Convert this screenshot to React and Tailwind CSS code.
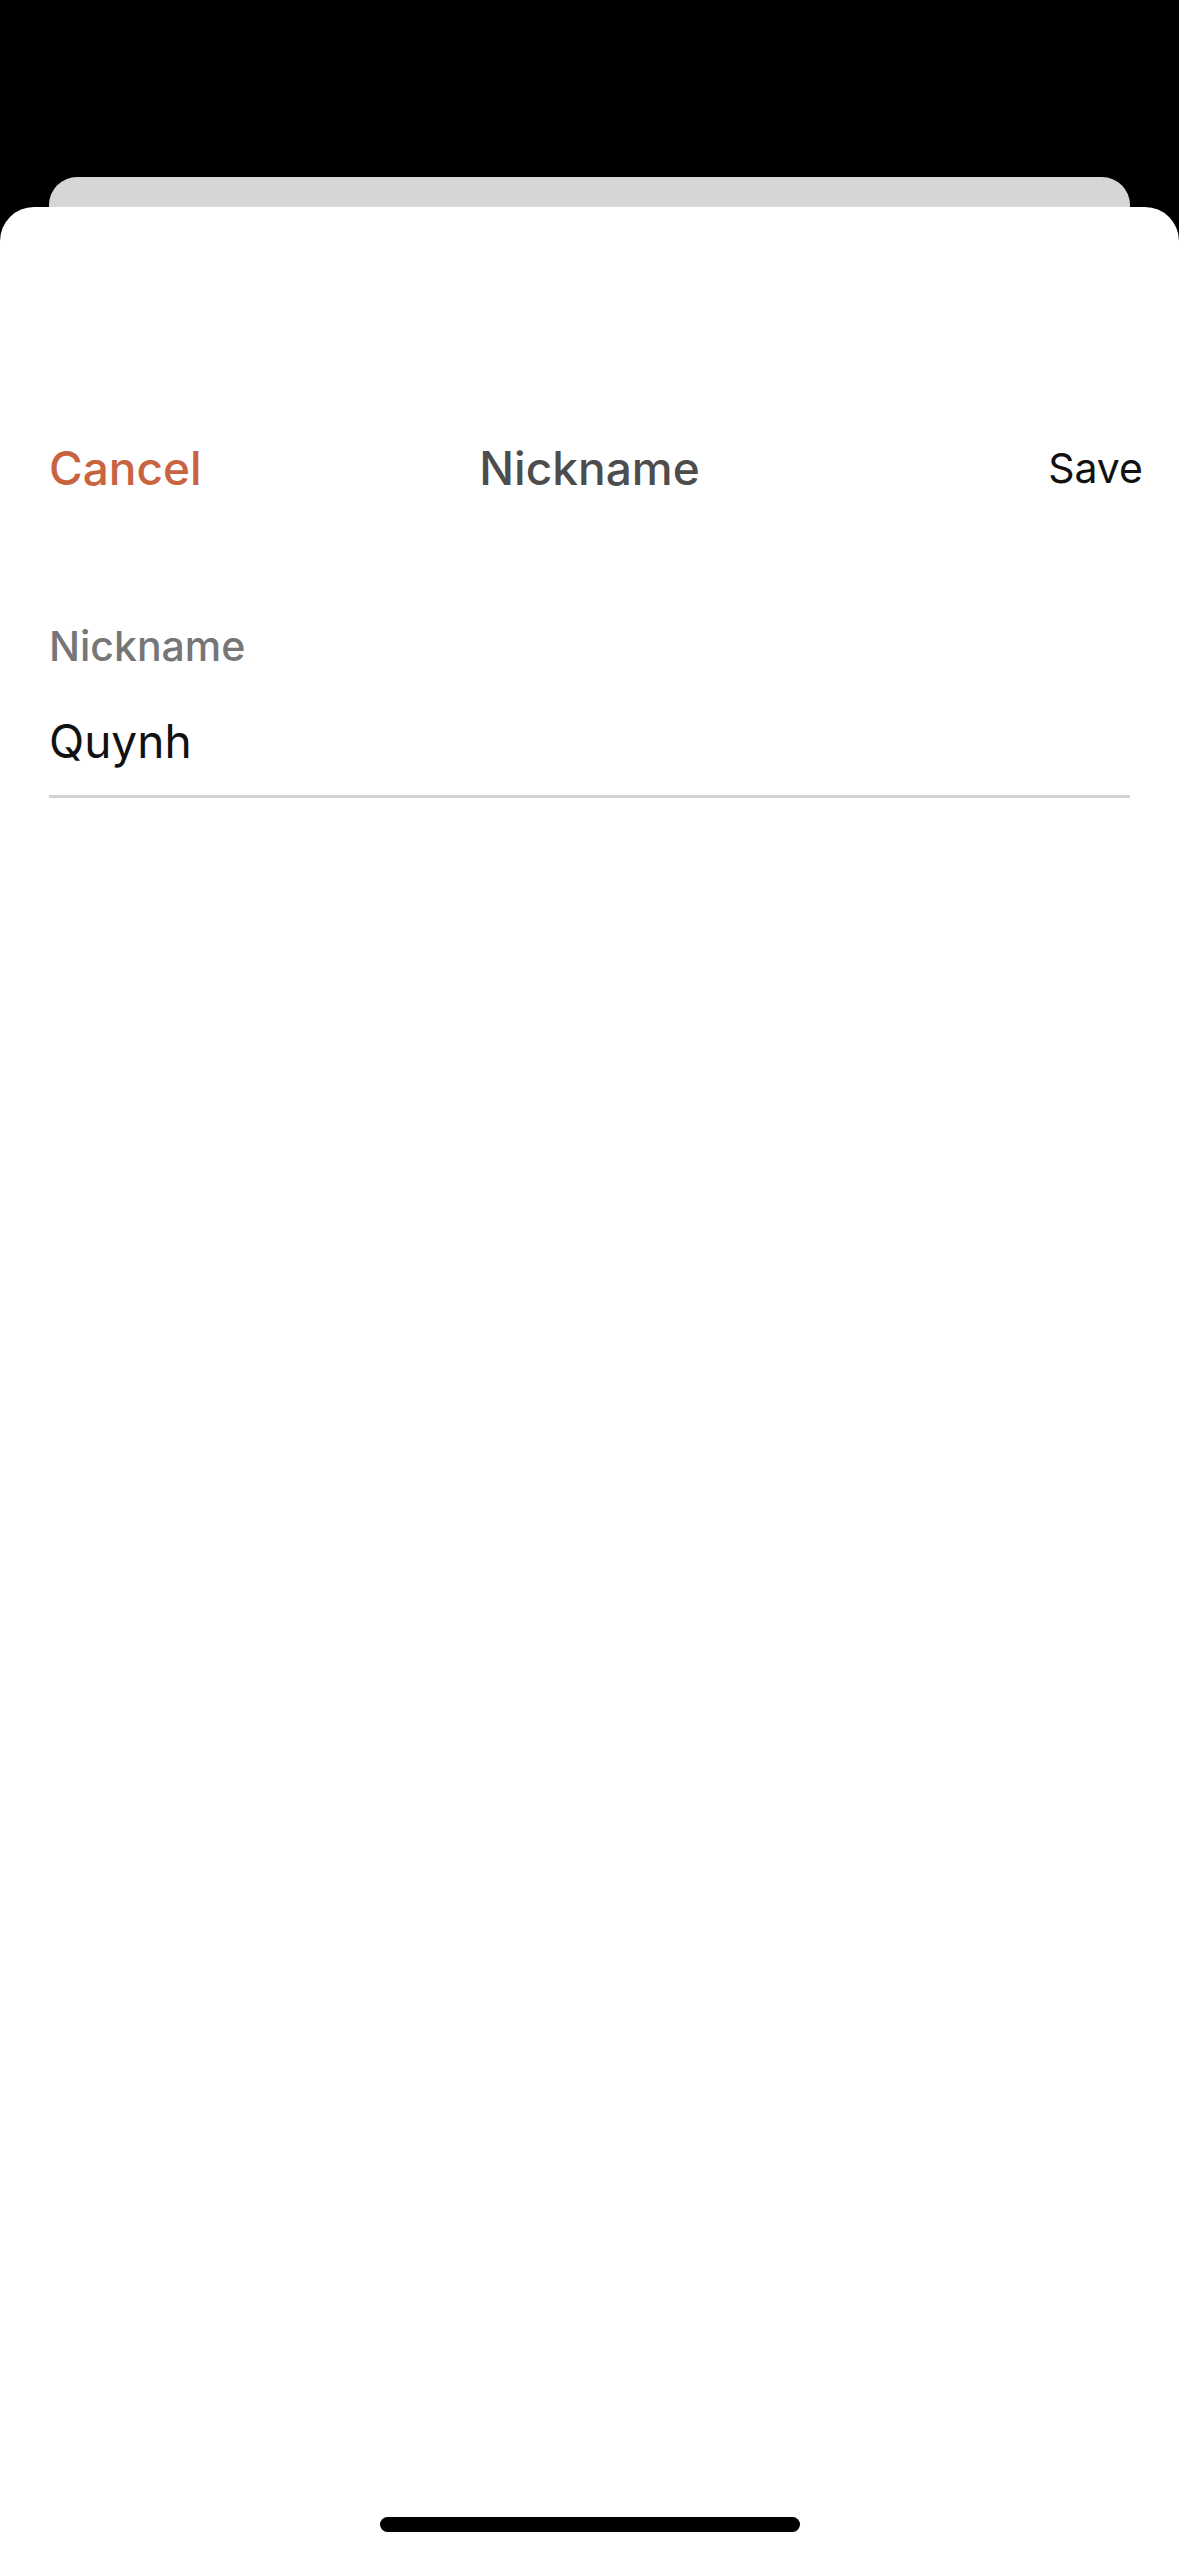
import React from 'react';

const font = { fontFamily: 'Inter, "Noto Sans", sans-serif' };

const NicknameSheet = () => {
    return (
        <div className="flex flex-col flex-1 bg-white rounded-t-[34px]">
            {/* Barra superior */}
            <div className="grid grid-cols-[1fr_auto_1fr] items-center h-[70px] mt-[226px]">
                <div className="pl-[49px]">
                    <span className="text-[46px] leading-none text-[#c8643f] font-medium">Cancel</span>
                </div>
                <span className="text-[46px] leading-none text-[#4d4d4d] font-medium">Nickname</span>
                <div className="pr-[36px] text-right">
                    <span className="text-[41px] leading-none text-[#111111]">Save</span>
                </div>
            </div>
            {/* Campo */}
            <div className="px-[49px] mt-[123px]">
                <label className="block text-[41px] leading-none text-[#767676] font-medium">Nickname</label>
                <div className="mt-[51px] pb-[31px] border-b-[3px] border-[#d3d3d3]">
                    <span className="text-[46px] leading-none text-[#111111]">Quynh</span>
                </div>
            </div>
            <div className="flex-1" />
            <div className="flex justify-center pb-[24px]">
                <div className="w-[420px] h-[15px] rounded-full bg-black" />
            </div>
        </div>
    );
};

export default function App() {
    return (
        <div className="w-[1179px] h-[2556px] bg-black flex flex-col pt-[177px] overflow-hidden" style={font}>
            <div className="mx-[49px] h-[30px] rounded-t-[28px] bg-[#d7d6d4]" />
            <NicknameSheet />
        </div>
    );
}
